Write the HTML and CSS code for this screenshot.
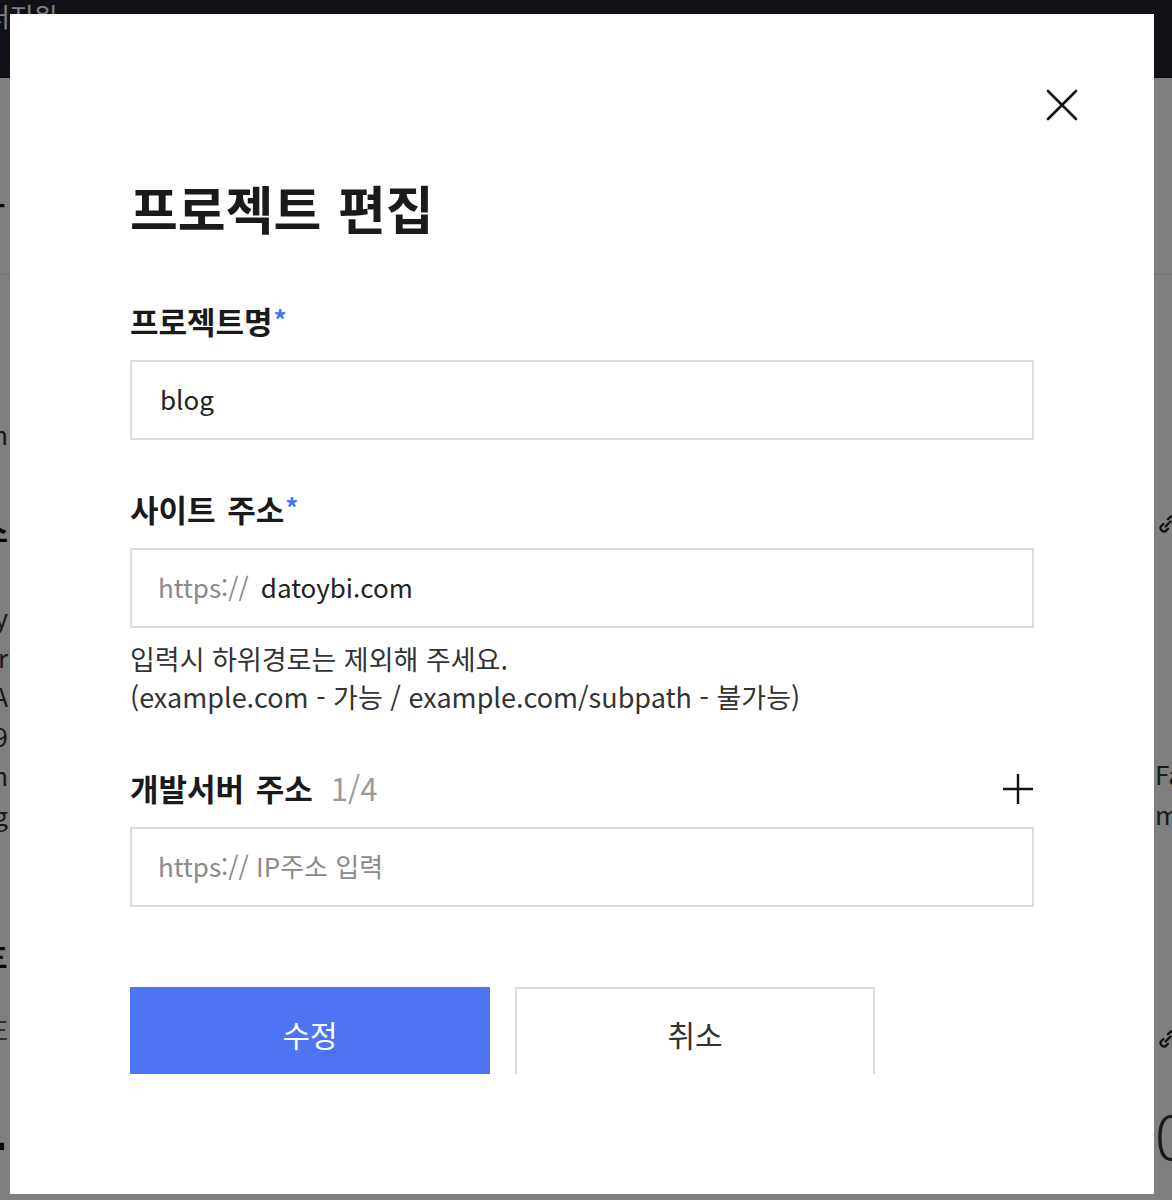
FILE: index.html
```html
<!DOCTYPE html>
<html lang="ko">
<head>
<meta charset="utf-8">
<title>프로젝트 편집</title>
<link rel="stylesheet" href="styles.css">
</head>
<body>
<div class="page">
  <header class="bg-header"><span class="bg-header-text">센터지원</span></header>
  <div class="bg-toolbar"><span class="bg-dash">ㅡ</span></div>
  <div class="bg-content">
    <div class="bg-left">
      <div class="bl l1">Team</div>
      <div class="bl l2">리스</div>
      <div class="bl l3">
        <div>day</div><div>mr</div><div>DA</div><div>2019</div><div>with</div><div>ng</div><div>ㅣ</div>
      </div>
      <div class="bl l4">三</div>
      <div class="bl l5">DE</div>
      <div class="bl l6">1</div>
    </div>
    <div class="bg-right">
      <div class="br r1"><svg width="26" height="26" viewBox="0 0 22 22"><path d="M9 13l4-4M7 11l-2 2a3 3 0 0 0 4 4l2-2M11 7l2-2a3 3 0 0 1 4 4l-2 2" fill="none" stroke="#222" stroke-width="2" stroke-linecap="round"/></svg></div>
      <div class="br r2">Fast</div>
      <div class="br r3">m</div>
      <div class="br r4"><svg width="26" height="26" viewBox="0 0 22 22"><path d="M9 13l4-4M7 11l-2 2a3 3 0 0 0 4 4l2-2M11 7l2-2a3 3 0 0 1 4 4l-2 2" fill="none" stroke="#222" stroke-width="2" stroke-linecap="round"/></svg></div>
      <div class="br r5">0</div>
    </div>
  </div>
</div>

<div class="overlay"></div>

<div class="modal" role="dialog" aria-labelledby="modal-title">
  <button class="close" aria-label="닫기">
    <svg width="32" height="32" viewBox="0 0 32 32"><path d="M2 2L30 30M30 2L2 30" stroke="#111" stroke-width="2.6" stroke-linecap="round"/></svg>
  </button>
  <div class="modal-body">
    <h1 class="title" id="modal-title">프로젝트 편집</h1>

    <div class="field">
      <label class="label">프로젝트명<span class="req">*</span></label>
      <div class="input"><span class="value">blog</span></div>
    </div>

    <div class="field">
      <label class="label">사이트 주소<span class="req">*</span></label>
      <div class="input"><span class="prefix">https://</span><span class="value">datoybi.com</span></div>
      <p class="help">입력시 하위경로는 제외해 주세요.<br>(example.com - 가능 / example.com/subpath - 불가능)</p>
    </div>

    <div class="field field-dev">
      <div class="label-row">
        <label class="label">개발서버 주소<span class="count">1/4</span></label>
        <button class="add" aria-label="추가">
          <svg width="32" height="32" viewBox="0 0 32 32"><path d="M16 1V31M1 16H31" stroke="#111" stroke-width="2.4"/></svg>
        </button>
      </div>
      <div class="input"><span class="placeholder">https:// IP주소 입력</span></div>
    </div>

    <div class="actions">
      <button class="btn btn-primary">수정</button>
      <button class="btn btn-cancel">취소</button>
    </div>
  </div>
</div>
</body>
</html>
```
FILE: styles.css
```css
* { box-sizing: border-box; }
html, body { margin: 0; padding: 0; }
body {
  font-family: "Noto Sans CJK KR", "Noto Sans", sans-serif;
  background: #fff;
  color: #222;
  width: 1172px;
  height: 1200px;
  overflow: hidden;
}

/* background page */
.page { width: 1172px; height: 1200px; overflow: hidden; }
.bg-header {
  height: 78px;
  background: #20222e;
  display: flex;
  margin-left: -38px;
}
.bg-header-text {
  color: #ffffff;
  font-size: 26px;
  line-height: 36px;
  margin-top: -2px;
}
.bg-toolbar {
  height: 197px;
  border-bottom: 2px solid #eee;
  padding-top: 106px;
  margin-left: -22px;
}
.bg-dash { font-size: 30px; font-weight: 700; color: #111; line-height: 40px; }
.bg-content { display: flex; }
.bg-left {
  width: 300px;
  margin-left: -292px;
  text-align: right;
  color: #333;
  font-size: 26px;
}
.bl { line-height: 40px; }
.l1 { margin-top: 139px; }
.l2 { margin-top: 55px; font-weight: 700; color: #111; font-size: 30px; }
.l3 { margin-top: 48px; line-height: 39.5px; }
.l4 { margin-top: 62px; font-weight: 700; color: #111; }
.l5 { margin-top: 33px; color: #666; }
.l6 { margin-top: 40px; font-size: 60px; font-weight: 700; color: #111; line-height: 70px; }
.bg-right {
  margin-left: auto;
  width: 200px;
  margin-right: -183px;
  color: #333;
  font-size: 26px;
}
.br { line-height: 40px; height: 40px; display: flex; align-items: center; }
.r1 { margin-top: 229px; }
.r2 { margin-top: 210px; }
.r4 { margin-top: 185px; }
.r5 { margin-top: 40px; font-size: 60px; font-weight: 300; height: 70px; line-height: 70px; }

.overlay {
  position: fixed;
  inset: 0;
  background: rgba(0, 0, 0, 0.5);
}

/* modal */
.modal {
  position: absolute;
  left: 10px;
  top: 14px;
  width: 1144px;
  height: 1180px;
  background: #fff;
  padding: 120px;
  display: flex;
  flex-direction: column;
}
.close {
  position: absolute;
  top: 75px;
  right: 76px;
  width: 32px;
  height: 32px;
  padding: 0;
  border: 0;
  background: none;
  display: flex;
}
.modal-body {
  flex: 1;
  overflow: hidden;
  display: flex;
  flex-direction: column;
}
.title {
  margin: 38px 0 0;
  font-size: 52px;
  line-height: 72px;
  font-weight: 700;
  color: #1a1a1a;
  word-spacing: 2px;
}
.field { display: flex; flex-direction: column; }
.field:nth-of-type(1) { margin-top: 57px; }
.field + .field { margin-top: 49px; }
.field-dev { margin-top: 52px !important; }
.label {
  font-size: 31px;
  line-height: 40px;
  font-weight: 700;
  color: #1a1a1a;
  display: flex;
  align-items: flex-start;
  word-spacing: 3px;
}
.req { color: #4a72f2; font-size: 26px; line-height: 26px; font-weight: 700; margin-left: 1px; margin-top: 5px; }
.count { color: #9a9a9a; font-weight: 400; margin-left: 18px; font-size: 31px; }
.label-row { display: flex; justify-content: space-between; align-items: center; }
.add { width: 32px; height: 32px; padding: 0; border: 0; background: none; display: flex; margin-top: 2px; }
.input {
  margin-top: 19px;
  height: 80px;
  border: 2px solid #dddddd;
  padding: 0 26px 4px 28px;
  display: flex;
  align-items: center;
  font-size: 26px;
  color: #222;
}
.prefix { color: #8a8a8a; margin-right: 12px; margin-left: -2px; }
.placeholder { color: #8a8a8a; margin-left: -2px; }
.help {
  margin: 12px 0 0;
  font-size: 27px;
  line-height: 38px;
  color: #333;
  letter-spacing: 0;
}
.actions {
  margin-top: 80px;
  display: flex;
  gap: 25px;
}
.btn {
  width: 360px;
  height: 90px;
  font-family: inherit;
  font-size: 30px;
  padding: 4px 0 0;
  border-radius: 0;
  cursor: pointer;
  flex: none;
}
.btn-primary { background: #4d74f2; color: #fff; border: 0; }
.btn-cancel { background: #fff; color: #333; border: 2px solid #dddddd; }
```
